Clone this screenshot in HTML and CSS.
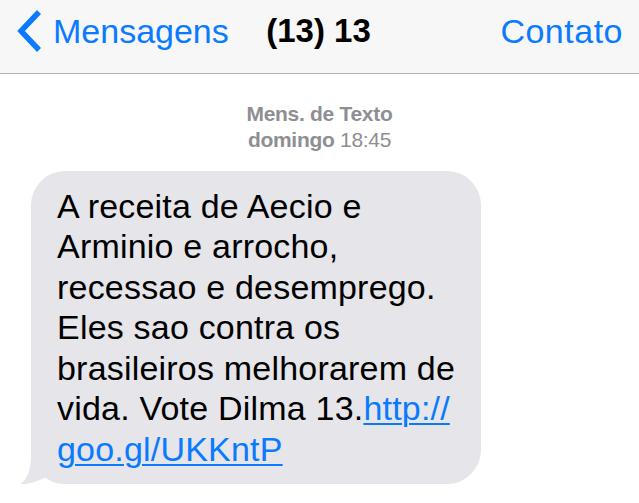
FILE: index.html
```html
<!DOCTYPE html>
<html lang="pt">
<head>
<meta charset="utf-8">
<title>Mensagens</title>
<link rel="stylesheet" href="styles.css">
</head>
<body>
<header class="navbar">
  <div class="nav-left">
    <svg class="chevron" width="30" height="44" viewBox="0 0 30 44" aria-hidden="true">
      <path d="M25 2 L7 21 L25 40" fill="none" stroke="#0a7aff" stroke-width="5.5" stroke-linejoin="miter" stroke-miterlimit="10"/>
    </svg>
    <span class="nav-link">Mensagens</span>
  </div>
  <div class="nav-title">(13) 13</div>
  <div class="nav-right"><span class="nav-link contato">Contato</span></div>
</header>
<main class="thread">
  <div class="stamp">
    <div class="stamp-line"><b>Mens. de Texto</b></div>
    <div class="stamp-line"><b>domingo</b> 18:45</div>
  </div>
  <div class="bubble">
    <svg class="tail" width="30" height="44" viewBox="0 0 30 44" aria-hidden="true">
      <path d="M12 2 L12 15 C12 30 8 40 1 44 C10 44.5 19 41 26 37.5 L26 2 Z" fill="#e5e5ea"/>
    </svg>
    <p class="bubble-text">A receita de Aecio e<br>Arminio e arrocho,<br>recessao e desemprego.<br>Eles sao contra os<br>brasileiros melhorarem de<br>vida. Vote Dilma 13.<a class="link" href="#">http://<br>goo.gl/UKKntP</a></p>
  </div>
</main>
</body>
</html>
```

FILE: styles.css
```css
* {
  box-sizing: border-box;
}

html, body {
  margin: 0;
  padding: 0;
  background: #ffffff;
}

body {
  font-family: "Liberation Sans", Arial, Helvetica, sans-serif;
  color: #000000;
  width: 639px;
  height: 503px;
  overflow: hidden;
}

.navbar {
  height: 74px;
  background: #f7f7f7;
  border-bottom: 1px solid #b2b2b2;
  display: grid;
  grid-template-columns: 1fr auto 1fr;
  align-items: start;
  padding: 12px 16px 0 14px;
  font-size: 34px;
  line-height: 38px;
}

.nav-left {
  display: flex;
  align-items: flex-start;
  gap: 9px;
}

.chevron {
  display: block;
  margin-top: -2px;
  flex: none;
}

.nav-link {
  color: #0a7aff;
  white-space: nowrap;
}

.contato {
  letter-spacing: 0.5px;
}

.nav-title {
  font-weight: bold;
  font-size: 33px;
  white-space: nowrap;
}

.nav-right {
  justify-self: end;
}

.thread {
  display: flex;
  flex-direction: column;
  align-items: flex-start;
}

.stamp {
  align-self: stretch;
  margin-top: 27px;
  text-align: center;
  color: #8e8e93;
  font-size: 21px;
  line-height: 26px;
  letter-spacing: -0.3px;
}

.stamp-line b {
  font-weight: bold;
}

.bubble {
  position: relative;
  margin-top: 18px;
  margin-left: 31px;
  width: 450px;
  background: #e5e5ea;
  border-radius: 34px;
  padding: 14.5px 20px 15px 26px;
}

.tail {
  position: absolute;
  left: -12px;
  bottom: 0;
  display: block;
}

.bubble-text {
  position: relative;
  margin: 0;
  font-size: 34px;
  line-height: 40.5px;
  letter-spacing: 0.2px;
  white-space: nowrap;
}

.link {
  color: #0a7aff;
  text-decoration: underline;
  text-decoration-thickness: 2px;
  text-underline-offset: 3px;
}
```
